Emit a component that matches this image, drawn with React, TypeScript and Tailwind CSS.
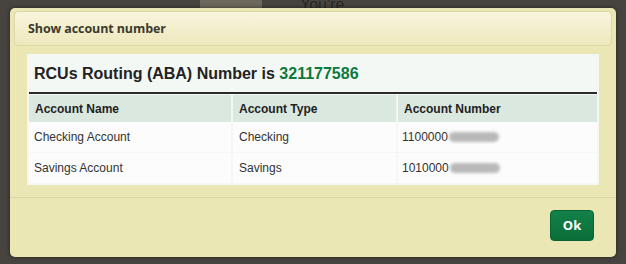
export default function App() {
  const rows = [
    { name: "Checking Account", type: "Checking", num: "1100000" },
    { name: "Savings Account", type: "Savings", num: "1010000" },
  ];

  return (
    <div className="relative w-[626px] h-[264px] overflow-hidden bg-[#47443f] pt-[8px] pl-[10px] font-['Liberation_Sans',Arial,sans-serif]">
      {/* page behind the modal */}
      <div className="absolute left-[200px] top-0 w-[62px] h-[8px] bg-[#6d685c]" />
      <div className="absolute left-[300px] top-[-7px] text-[16px] text-[#2a2824]">You're</div>

      <div className="relative w-[606px] h-[249px] rounded-[5px] bg-[#ebe7b5] shadow-[0_0_4px_rgba(0,0,0,0.5)] flex flex-col">
        <div className="mx-[4px] mt-[3px] h-[35px] rounded-[4px] border border-[#ddd8a8] bg-gradient-to-b from-[#f8f5de] to-[#ede8bc] flex items-center pl-[13px] pt-[2px]">
          <span className="font-['Open_Sans',sans-serif] font-bold text-[12.5px] tracking-[-0.1px] text-[#3b3a2c]">
            Show account number
          </span>
        </div>

        <div className="mx-[17px] mt-[8px] h-[131px] bg-[#f4f8f5] px-[2px] flex flex-col">
          <div className="h-[38px] flex items-center pl-[5px] pt-[1px] text-[16px] font-bold text-[#222]">
            RCUs Routing (ABA) Number is&nbsp;<span className="text-[#0b7a3e]">321177586</span>
          </div>
          <div className="h-[2px] bg-[#2a2a2a]" />
          <div className="grid grid-cols-[202px_163px_1fr] gap-x-[2px] mt-[1px] text-[12px] text-[#333]">
            <div className="h-[27px] bg-[#dbe8e0] flex items-center pl-[6px] font-bold text-[#222]">Account Name</div>
            <div className="h-[27px] bg-[#dbe8e0] flex items-center pl-[6px] font-bold text-[#222]">Account Type</div>
            <div className="h-[27px] bg-[#dbe8e0] flex items-center pl-[6px] font-bold text-[#222]">Account Number</div>
            {rows.map((r, i) => (
              <div key={r.name} className="contents">
                <div className={`h-[30px] bg-[#fbfcfb] flex items-center pl-[5px] ${i ? "mt-[1px]" : ""}`}>{r.name}</div>
                <div className={`h-[30px] bg-[#fbfcfb] flex items-center pl-[6px] ${i ? "mt-[1px]" : ""}`}>{r.type}</div>
                <div className={`h-[30px] bg-[#fbfcfb] flex items-center pl-[4px] ${i ? "mt-[1px]" : ""}`}>
                  {r.num}
                  <span className="ml-[1px] w-[50px] h-[10px] rounded-full bg-[#b9b9b9] blur-[1.5px]" />
                </div>
              </div>
            ))}
          </div>
        </div>

        <div className="mt-[12px] h-px bg-[#d9d4a9]" />
        <div className="flex justify-end pr-[22px] pt-[12px]">
          <button className="w-[44px] h-[31px] rounded-[4px] bg-gradient-to-b from-[#13814a] to-[#0b6e39] border border-[#0a6334] text-white font-['Open_Sans',sans-serif] font-bold text-[13px]">
            Ok
          </button>
        </div>
      </div>
    </div>
  );
}
